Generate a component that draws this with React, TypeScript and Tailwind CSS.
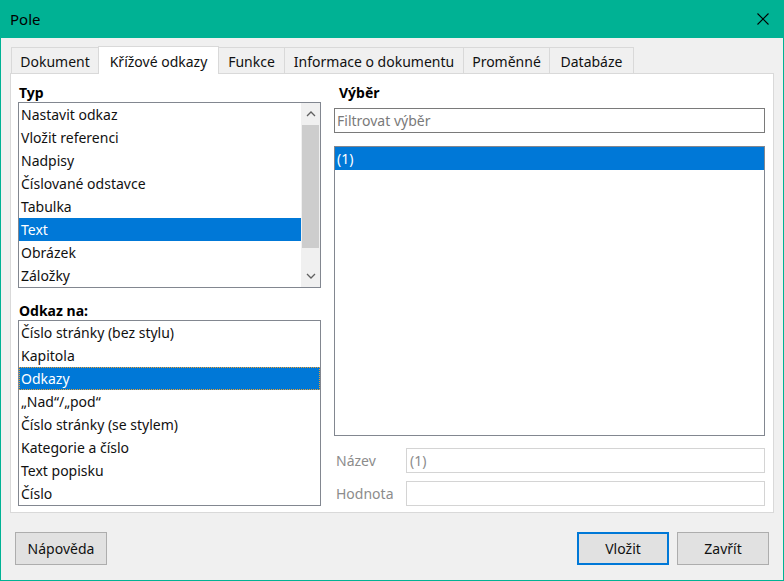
import React from "react";

const font = "font-['Noto_Sans','Open_Sans','Liberation_Sans',sans-serif]";

function Row({ text, selected, focus }: { text: string; selected?: boolean; focus?: boolean }) {
  return (
    <div
      className={
        "h-[23px] leading-[23px] pl-[2px] whitespace-nowrap " +
        (selected ? "bg-[#0078d7] text-white " : "text-[#111] ") +
        (focus ? "outline outline-1 outline-dotted outline-[#f0a030] -outline-offset-1" : "")
      }
    >
      {text}
    </div>
  );
}

function Tab({ label, w, active }: { label: string; w: string; active?: boolean }) {
  return (
    <div
      className={
        w +
        " flex items-center justify-center pt-[2px] border border-b-0 border-[#d9d9d9] text-[14px] text-[#111] " +
        (active ? "h-[28px] bg-white -mb-px relative z-10" : "h-[26px] bg-[#f0f0f0] -ml-px")
      }
    >
      {label}
    </div>
  );
}

export default function App() {
  const typ = [
    "Nastavit odkaz",
    "Vložit referenci",
    "Nadpisy",
    "Číslované odstavce",
    "Tabulka",
    "Text",
    "Obrázek",
    "Záložky",
  ];
  const odkaz = [
    "Číslo stránky (bez stylu)",
    "Kapitola",
    "Odkazy",
    "„Nad“/„pod“",
    "Číslo stránky (se stylem)",
    "Kategorie a číslo",
    "Text popisku",
    "Číslo",
  ];
  return (
    <div className={"w-[784px] h-[581px] flex flex-col bg-[#f0f0f0] border-x border-b border-[#00b294] text-[14px] " + font}>
      {/* title bar */}
      <div className="h-[38px] -mx-px bg-[#00b294] flex items-center justify-between pl-[10px] pr-[15px] shrink-0">
        <span className="text-[15px] text-black">Pole</span>
        <svg width="12" height="12" viewBox="0 0 12 12">
          <path d="M0.5 0.5 L11.5 11.5 M11.5 0.5 L0.5 11.5" stroke="#000" strokeWidth="1.1" />
        </svg>
      </div>

      {/* tabs */}
      <div className="pl-[10px] pt-[8px] flex items-end">
        <div className="ml-px flex items-end">
          <Tab label="Dokument" w="w-[88px]" />
          <Tab label="Křížové odkazy" w="w-[121px] -ml-px" active />
          <Tab label="Funkce" w="w-[67px]" />
          <Tab label="Informace o dokumentu" w="w-[180px]" />
          <Tab label="Proměnné" w="w-[87px]" />
          <Tab label="Databáze" w="w-[85px]" />
        </div>
      </div>

      {/* panel */}
      <div className="ml-[9px] w-[764px] h-[440px] bg-white border border-[#d9d9d9] flex pl-[7px] pr-[7px] pt-[9px] gap-[13px]">
        {/* left column */}
        <div className="w-[303px] flex flex-col">
          <div className="h-[19px] leading-[19px] font-bold text-black pl-px">Typ</div>
          <div className="h-[186px] border border-[#828790] bg-white flex">
            <div className="flex-1 flex flex-col">
              {typ.map((t) => (
                <Row key={t} text={t} selected={t === "Text"} />
              ))}
            </div>
            <div className="w-[19px] bg-[#f0f0f0] flex flex-col items-center">
              <div className="h-[22px] flex items-center justify-center">
                <svg width="10" height="6" viewBox="0 0 10 6">
                  <path d="M1 5 L5 1 L9 5" stroke="#606060" strokeWidth="1.3" fill="none" />
                </svg>
              </div>
              <div className="w-[17px] h-[123px] bg-[#cdcdcd]" />
              <div className="flex-1" />
              <div className="h-[22px] flex items-center justify-center">
                <svg width="10" height="6" viewBox="0 0 10 6">
                  <path d="M1 1 L5 5 L9 1" stroke="#606060" strokeWidth="1.3" fill="none" />
                </svg>
              </div>
            </div>
          </div>
          <div className="mt-[13px] h-[19px] leading-[19px] font-bold text-black pl-px">Odkaz na:</div>
          <div className="h-[186px] border border-[#828790] bg-white flex flex-col">
            {odkaz.map((t) => (
              <Row key={t} text={t} selected={t === "Odkazy"} focus={t === "Odkazy"} />
            ))}
          </div>
        </div>

        {/* right column */}
        <div className="w-[431px] flex flex-col">
          <div className="h-[19px] leading-[19px] font-bold text-black pl-[5px]">Výběr</div>
          <div className="mt-[6px] h-[25px] border border-[#7a7a7a] bg-white flex items-center pl-[2px] text-[#7a7a7a]">
            Filtrovat výběr
          </div>
          <div className="mt-[13px] h-[290px] border border-[#828790] bg-white flex flex-col">
            <Row text="(1)" selected />
          </div>
          <div className="mt-[12px] h-[25px] flex items-center">
            <div className="w-[72px] pl-[2px] text-[#8c8c8c]">Název</div>
            <div className="flex-1 h-[25px] border border-[#d4d4d4] bg-white flex items-center pl-[3px] text-[#8c8c8c]">
              (1)
            </div>
          </div>
          <div className="mt-[8px] h-[25px] flex items-center">
            <div className="w-[72px] pl-[2px] text-[#8c8c8c]">Hodnota</div>
            <div className="flex-1 h-[25px] border border-[#d4d4d4] bg-white" />
          </div>
        </div>
      </div>

      {/* buttons */}
      <div className="flex items-start pt-[19px] pl-[14px] pr-[14px]">
        <div className="w-[92px] h-[33px] bg-[#e1e1e1] border border-[#adadad] flex items-center justify-center text-[#111]">
          Nápověda
        </div>
        <div className="flex-1" />
        <div className="w-[92px] h-[33px] bg-[#e1e1e1] border-2 border-[#0078d7] flex items-center justify-center text-[#111]">
          Vložit
        </div>
        <div className="ml-[8px] w-[92px] h-[33px] bg-[#e1e1e1] border border-[#adadad] flex items-center justify-center text-[#111]">
          Zavřít
        </div>
      </div>
    </div>
  );
}
